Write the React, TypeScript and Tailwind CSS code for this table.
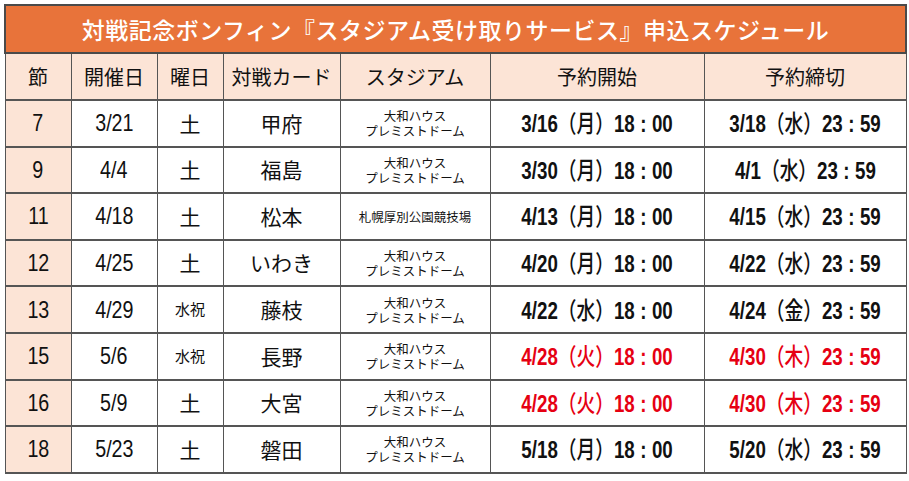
import React from "react";

type Row = {
  round: string;
  date: string;
  day: string;
  opponent: string;
  stadium: string[];
  start: [string, string, string];
  end: [string, string, string];
  red?: boolean;
};

const DOME = ["大和ハウス", "プレミストドーム"];

const rows: Row[] = [
  { round: "7", date: "3/21", day: "土", opponent: "甲府", stadium: DOME, start: ["3/16", "月", "18"], end: ["3/18", "水", "23"] },
  { round: "9", date: "4/4", day: "土", opponent: "福島", stadium: DOME, start: ["3/30", "月", "18"], end: ["4/1", "水", "23"] },
  { round: "11", date: "4/18", day: "土", opponent: "松本", stadium: ["札幌厚別公園競技場"], start: ["4/13", "月", "18"], end: ["4/15", "水", "23"] },
  { round: "12", date: "4/25", day: "土", opponent: "いわき", stadium: DOME, start: ["4/20", "月", "18"], end: ["4/22", "水", "23"] },
  { round: "13", date: "4/29", day: "水祝", opponent: "藤枝", stadium: DOME, start: ["4/22", "水", "18"], end: ["4/24", "金", "23"] },
  { round: "15", date: "5/6", day: "水祝", opponent: "長野", stadium: DOME, start: ["4/28", "火", "18"], end: ["4/30", "木", "23"], red: true },
  { round: "16", date: "5/9", day: "土", opponent: "大宮", stadium: DOME, start: ["4/28", "火", "18"], end: ["4/30", "木", "23"], red: true },
  { round: "18", date: "5/23", day: "土", opponent: "磐田", stadium: DOME, start: ["5/18", "月", "18"], end: ["5/20", "水", "23"] },
];

const jp = "font-['Noto_Sans_CJK_JP',sans-serif]";
const num = "font-['Liberation_Sans','Noto_Sans_CJK_JP',sans-serif]";
const cell = "border-x border-y-2 border-[#555] text-center align-middle p-0";

// condensed look of the original numerals
const Narrow: React.FC<{ children: React.ReactNode; scale?: string }> = ({ children, scale = "scale-x-[0.8]" }) => (
  <span className={`inline-block whitespace-nowrap ${scale}`}>{children}</span>
);

const Stamp: React.FC<{ parts: [string, string, string]; minutes: string; red?: boolean }> = ({ parts, minutes, red }) => (
  <Narrow scale="scale-x-[0.78]">
    <span className={`${num} font-bold ${red ? "text-[#e60012]" : ""}`}>
      {parts[0]}
      <span className={`${jp} font-medium`}>（{parts[1]}）</span>
      {parts[2]}
      <span className="mx-[7px]">:</span>
      {minutes}
    </span>
  </Narrow>
);

const App: React.FC = () => {
  return (
    <div className="bg-white w-[909px] h-[481px] pl-[4px] pt-[4px]">
      <table className={`w-[901px] table-fixed border-collapse text-[#111] ${jp}`}>
        <colgroup>
          <col className="w-[66px]" />
          <col className="w-[86px]" />
          <col className="w-[66px]" />
          <col className="w-[117px]" />
          <col className="w-[150px]" />
          <col className="w-[214px]" />
          <col className="w-[202px]" />
        </colgroup>
        <thead>
          <tr className="h-[48px]">
            <th
              colSpan={7}
              className="border-2 border-[#4a4a4a] bg-[#e8733a] text-white text-[23px] font-medium tracking-[0.5px] text-center"
            >
              対戦記念ボンフィン『スタジアム受け取りサービス』申込スケジュール
            </th>
          </tr>
          <tr className="h-[47px] bg-[#fce4d6] text-[20px]">
            <th className={`${cell} border-t-[#4a3a30] font-normal`}>節</th>
            <th className={`${cell} border-t-[#4a3a30] font-normal`}>開催日</th>
            <th className={`${cell} border-t-[#4a3a30] font-normal`}>曜日</th>
            <th className={`${cell} border-t-[#4a3a30] font-normal`}>対戦カード</th>
            <th className={`${cell} border-t-[#4a3a30] font-normal`}>スタジアム</th>
            <th className={`${cell} border-t-[#4a3a30] font-normal`}>予約開始</th>
            <th className={`${cell} border-t-[#4a3a30] font-normal`}>予約締切</th>
          </tr>
        </thead>
        <tbody>
          {rows.map((r) => (
            <tr key={r.round} className="h-[46.6px]">
              <td className={`${cell} bg-[#fce4d6] text-[24px] ${num}`}>
                <Narrow scale="scale-x-[0.82]">{r.round}</Narrow>
              </td>
              <td className={`${cell} text-[24px] ${num}`}>
                <Narrow scale="scale-x-[0.82]">{r.date}</Narrow>
              </td>
              <td className={`${cell} ${r.day.length > 1 ? "text-[15px]" : "text-[21px]"}`}>{r.day}</td>
              <td className={`${cell} text-[21px]`}>{r.opponent}</td>
              <td className={`${cell} text-[12.5px] leading-[15px]`}>
                {r.stadium.map((s) => (
                  <div key={s}>{s}</div>
                ))}
              </td>
              <td className={`${cell} text-[24px]`}>
                <Stamp parts={r.start} minutes="00" red={r.red} />
              </td>
              <td className={`${cell} text-[24px]`}>
                <Stamp parts={r.end} minutes="59" red={r.red} />
              </td>
            </tr>
          ))}
        </tbody>
      </table>
    </div>
  );
};

export default App;
